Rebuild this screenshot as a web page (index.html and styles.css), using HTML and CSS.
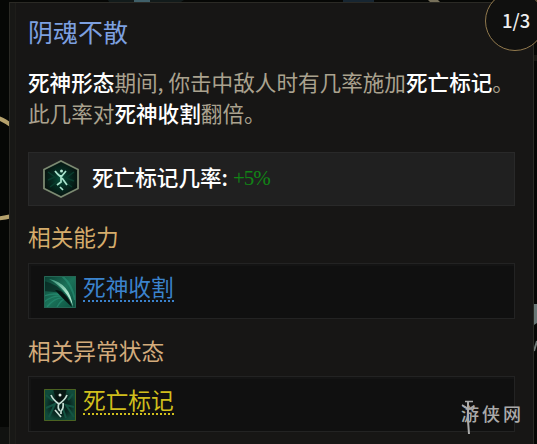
FILE: index.html
```html
<!DOCTYPE html>
<html lang="zh-CN">
<head>
<meta charset="utf-8">
<title>阴魂不散</title>
<link rel="stylesheet" href="styles.css">
</head>
<body>
<svg class="backdrop" viewBox="0 0 537 444" aria-hidden="true">
  <path d="M108 0h76l-3 2h-72z" fill="#121b1b"/><path d="M134 0h16v2h-16z" fill="#40606a"/>
  <path d="M343 0h31v2h-31z" fill="#172632"/><path d="M428 0h10l2 2h-10z" fill="#77705a"/>
  <path d="M-2 118Q4 120 12 126M-2 218.500Q4 218 12 216" fill="none" stroke="#b5a16c" stroke-width="4"/>
  <path d="M0 427h9v17H0z" fill="#111210"/>
  <path d="M534 304h3v19l-3 2z" fill="#687675"/><path d="M534 351l3-10" stroke="#707977" stroke-width="2"/>
  <path d="M534 55h3v6h-3z" fill="#181813"/>
</svg>
<main class="tooltip">
  <h1>阴魂不散</h1>
  <p class="description"><b>死神形态</b>期间, 你击中敌人时有几率施加<b>死亡标记</b>。<br>此几率对<b>死神收割</b>翻倍。</p>
  <section class="card stat">
    <svg class="hex" viewBox="0 0 36 38">
      <defs><radialGradient id="glow"><stop offset="0" stop-color="#07513c"/><stop offset=".5" stop-color="#052b21"/><stop offset="1" stop-color="#06130f"/></radialGradient></defs>
      <path d="M18 1L35 9.500V28.500L18 37L1 28.500V9.500z" fill="url(#glow)" stroke="#7b8971" stroke-width="1.800"/>
      <path d="M5 12l7 5-7 3M31 12l-8 6 8 3M7 27l8-6M29 27l-7-5" stroke="#0a3d2e" stroke-width="1.500" fill="none"/>
      <path d="M12 11q2 3 6 6l5-6M18 15v7l-4 3M19 18l5 7M17 27l3 3" fill="none" stroke="#a9e4cd" stroke-width="1.700"/>
      <circle cx="18.500" cy="11" r="1.500" fill="#b9ead6"/>
    </svg>
    <strong>死亡标记几率:</strong><span class="bonus">+5%</span>
  </section>
  <h2>相关能力</h2>
  <section class="card related">
    <svg class="icon" viewBox="0 0 32 32">
      <defs>
        <linearGradient id="reap" x2="1" y2="1"><stop stop-color="#0a3d31"/><stop offset=".5" stop-color="#1b7259"/><stop offset="1" stop-color="#0b5140"/></linearGradient>
        <linearGradient id="edge" x2="1" y2="1"><stop stop-color="#2f8d72"/><stop offset=".6" stop-color="#a4dfc5"/><stop offset="1" stop-color="#b9ead4"/></linearGradient>
      </defs>
      <path d="M0 0h32v32H0z" fill="url(#reap)"/>
      <path d="M0 5Q13 8 20 17L0 15z" fill="#07231e" opacity=".7"/>
      <path d="M0 20Q12 16 20 20M0 26Q10 18 20 21M3 31Q11 21 20 22M13 31q4-7 8-8" stroke="#2a9478" stroke-width="1.300" fill="none" opacity=".6"/>
      <path d="M18 0q10 8 13 24" stroke="#2a9478" stroke-width="2" fill="none" opacity=".6"/>
      <path d="M11 14Q22 14 28 31Q21 25 11 14z" fill="#051310"/>
      <path d="M5 3Q26 7 29 31Q23 13 5 3z" fill="url(#edge)"/>
      <path d="M.5.5h31v31H.5z" fill="none" stroke="#256554"/>
    </svg>
    <a class="ability">死神收割</a>
  </section>
  <h2 class="status-heading">相关异常状态</h2>
  <section class="card related">
    <svg class="icon" viewBox="0 0 32 32">
      <defs><radialGradient id="mark"><stop stop-color="#06221c"/><stop offset=".55" stop-color="#08241e"/><stop offset="1" stop-color="#104a3a"/></radialGradient></defs>
      <path d="M0 0h32v32H0z" fill="url(#mark)"/>
      <path d="M2 19l9-4-6 13M30 18l-8-2 8 12M2 6l7 6M29 5l-5 6M22 29l-3-9" stroke="#135442" stroke-width="2" fill="none"/>
      <path d="M9 0h14l-4 14h-6z" fill="#07100e" opacity=".8"/>
      <path d="M7 6q2 5 8 9 6-4 8-9M15 14q-2 5 1 8M19 14q1 5-2 8M11 21l6 7M17 22v3" fill="none" stroke="#c6dfd4" stroke-width="1.700"/>
      <circle cx="16" cy="6" r="1.500" fill="#e1eee7"/>
      <path d="M.5.5h31v31H.5z" fill="none" stroke="#4b6221"/>
    </svg>
    <a class="ailment">死亡标记</a>
  </section>
</main>
<div class="rank">1/3</div>
<div class="watermark"><svg viewBox="0 0 14 35" aria-hidden="true"><path d="M7 1v20l1 13" fill="none" stroke="#aaa" stroke-width="2"/><path d="M4 1.500h8M1 5l5 3M13 6L8 9" fill="none" stroke="#aaa" stroke-width="1.500"/></svg><span>游侠网</span></div>
</body>
</html>
```
FILE: styles.css
```css
* { box-sizing: border-box; }
body {
  margin: 0;
  height: 444px;
  overflow: hidden;
  position: relative;
  background: #060705;
  font-family: "Noto Sans CJK SC", sans-serif;
}
.backdrop { position: absolute; inset: 0; width: 537px; height: 444px; }
.tooltip {
  position: relative;
  margin: 2px 3px 0 9px;
  height: 450px;
  padding: 12px 18px 0;
  background: #171615;
  border: 1px solid #2b2a25;
  box-shadow: inset 5px 0 #181816, inset 6px 0 #1e1d1a;
}
h1, h2, p { margin: 0; font-weight: 400; }
h1 { height: 33px; font-size: 25px; line-height: 33px; color: #7da0e0; }
.description {
  margin-top: 18px;
  height: 62px;
  font-size: 21.6px;
  line-height: 31px;
  white-space: nowrap;
  color: #aaa28f;
}
.description b { color: #fff; font-weight: 500; }
.card {
  display: flex;
  align-items: center;
  width: 487px;
  height: 56px;
  border: 1px solid #232323;
  background: #101010;
  box-shadow: inset 2px 2px #141414;
}
.stat { height: 54px; margin-top: 24px; padding-left: 14px; background: #202020; border-color: #292929; box-shadow: none; }
.hex { width: 36px; height: 38px; }
strong { margin: -4px 0 0 13px; color: #fff; font-size: 21.6px; font-weight: 500; line-height: 32px; }
.bonus { margin: -2px 0 0 5px; color: #118416; font: 21px/32px "Liberation Serif", serif; letter-spacing: -1px; }
h2 { height: 32px; margin: 15px 0 10px; font-size: 22.7px; line-height: 32px; color: #d5ac6b; }
.status-heading { margin: 16px 0 9px; color: #d3ab7c; }
.related { padding-left: 15px; }
.icon { width: 32px; height: 32px; margin-top: 2px; }
a { height: 28px; margin: -6px 0 0 7px; font-size: 22.7px; line-height: 26px; border-bottom: 2px dotted; }
.ability { color: #3b83cd; }
.ailment { color: #d1bf1c; }
.rank {
  position: absolute;
  left: 485px;
  top: -9px;
  width: 60px;
  height: 60px;
  border: 1px solid #91794d;
  border-radius: 50%;
  background: #10100f;
  color: #eee;
  font-size: 18.5px;
  font-weight: 500;
  line-height: 56px;
  padding-left: 16px;
}
.watermark { position: absolute; left: 460px; top: 400px; width: 62px; height: 35px; color: #aaa; }
.watermark span { display: block; padding: 1px 0 0 1px; font-size: 18px; font-weight: 500; line-height: 25px; letter-spacing: 3px; white-space: nowrap; }
.watermark svg { position: absolute; left: 1px; top: 0; width: 14px; height: 35px; }
```
